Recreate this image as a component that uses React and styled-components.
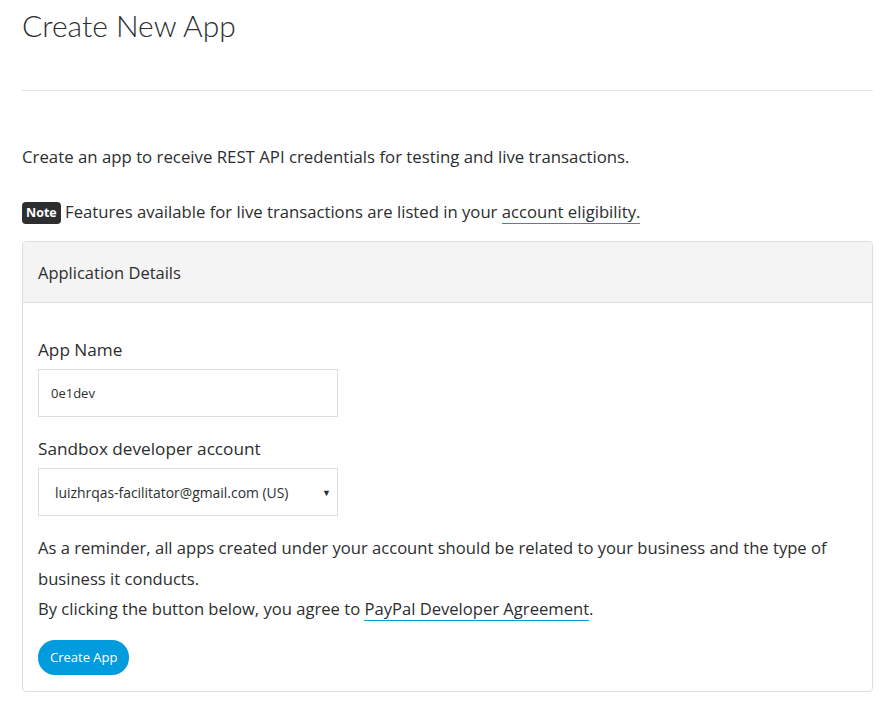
import styled, { createGlobalStyle } from 'styled-components';

const GlobalStyle = createGlobalStyle`
  body {
    margin: 0;
    background: #fff;
    font-family: "Open Sans", Lato, sans-serif;
    color: #2c2e2f;
  }
`;

export default function App() {
  return (
    <Page>
      <GlobalStyle />
      <Title>Create New App</Title>
      <Divider />
      <Intro>Create an app to receive REST API credentials for testing and live transactions.</Intro>
      <NoteLine>
        <Badge>Note</Badge> Features available for live transactions are listed in your{' '}
        <Link href="#">account eligibility.</Link>
      </NoteLine>
      <Panel>
        <PanelHeader>Application Details</PanelHeader>
        <PanelBody>
          <Field>
            <Label>App Name</Label>
            <Input defaultValue="0e1dev" />
          </Field>
          <Field $last>
            <Label>Sandbox developer account</Label>
            <Select>
              <span>luizhrqas-facilitator@gmail.com (US)</span>
              <Caret>▼</Caret>
            </Select>
          </Field>
          <Reminder>
            As a reminder, all apps created under your account should be related to your business and the type of
            business it conducts.
            <br />
            By clicking the button below, you agree to <Link href="#">PayPal Developer Agreement</Link>.
          </Reminder>
          <Button>Create App</Button>
        </PanelBody>
      </Panel>
    </Page>
  );
}

const Page = styled.div`
  padding: 0 15px 22px 22px;
  width: 851px;
`;

const Title = styled.h1`
  margin: 0;
  padding-top: 6px;
  font-family: Lato, sans-serif;
  font-size: 30px;
  font-weight: 300;
  line-height: 38px;
  color: #2c2e2f;
`;

const Divider = styled.hr`
  margin: 46px 0 0;
  border: 0;
  border-top: 1px solid #e5e5e5;
`;

const Intro = styled.p`
  margin: 54px 0 0;
  font-size: 16.8px;
  line-height: 24px;
`;

const NoteLine = styled.p`
  margin: 31px 0 0;
  font-size: 16.7px;
  line-height: 24px;
`;

const Badge = styled.span`
  display: inline-block;
  background: #2c2e2f;
  color: #fff;
  font-size: 12.5px;
  font-weight: 700;
  line-height: 22px;
  padding: 0 4px;
  border-radius: 4px;
  vertical-align: 1px;
`;

const Link = styled.a`
  color: #2c2e2f;
  text-decoration: none;
  border-bottom: 1px solid #009cde;
`;

const Panel = styled.section`
  margin-top: 17px;
  border: 1px solid #dedede;
  border-radius: 4px;
  overflow: hidden;
`;

const PanelHeader = styled.div`
  background: #f4f4f4;
  border-bottom: 1px solid #dedede;
  height: 60px;
  display: flex;
  align-items: center;
  padding-left: 15px;
  font-size: 16.5px;
`;

const PanelBody = styled.div`
  padding: 35px 15px 16px;
  display: flex;
  flex-direction: column;
  align-items: flex-start;
`;

const Field = styled.div`
  display: flex;
  flex-direction: column;
  margin-bottom: ${(p) => (p.$last ? '17px' : '20px')};
`;

const Label = styled.label`
  font-size: 17.2px;
  font-weight: 500;
  line-height: 24px;
  margin-bottom: 7px;
`;

const Input = styled.input`
  box-sizing: border-box;
  width: 300px;
  height: 48px;
  border: 1px solid #dedede;
  padding: 0 12px;
  font-family: inherit;
  font-size: 13px;
  color: #2c2e2f;
  outline: none;
`;

const Select = styled.div`
  box-sizing: border-box;
  width: 300px;
  height: 48px;
  border: 1px solid #dedede;
  padding: 0 6px 0 16px;
  display: flex;
  align-items: center;
  justify-content: space-between;
  font-size: 13.9px;
`;

const Caret = styled.span`
  font-size: 9px;
`;

const Reminder = styled.p`
  margin: 0;
  font-size: 16.6px;
  line-height: 30.5px;
`;

const Button = styled.button`
  margin-top: 15px;
  background: #009cde;
  color: #fff;
  border: 0;
  border-radius: 17px;
  height: 35px;
  padding: 0 12px;
  font-family: inherit;
  font-size: 13px;
`;
